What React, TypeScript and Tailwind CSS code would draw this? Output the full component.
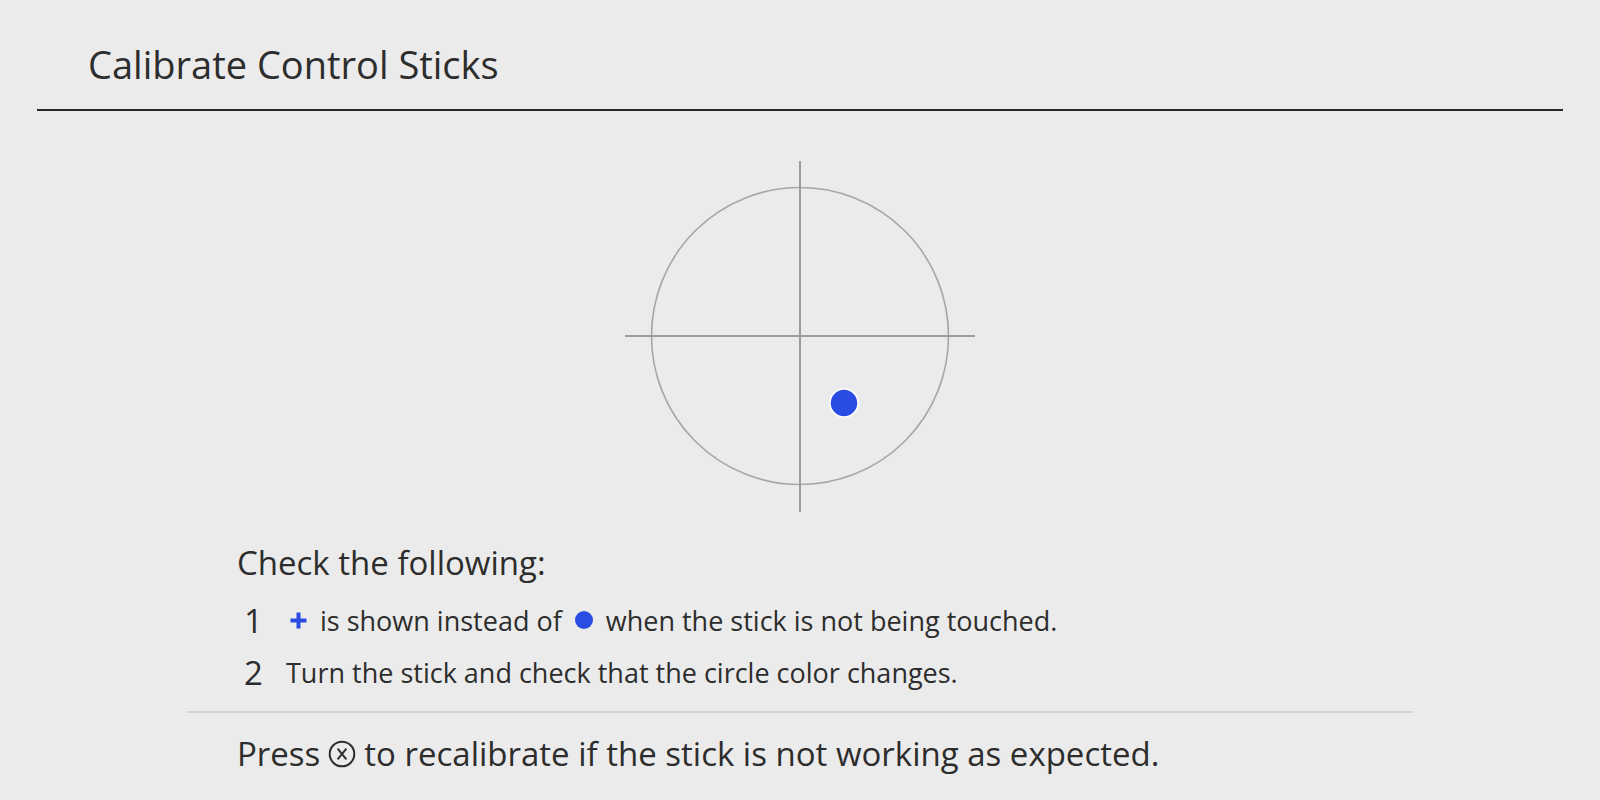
import React from 'react';

const BLUE = '#2b4ce3';

function StickDiagram() {
  return (
    <svg width="352" height="352" viewBox="0 0 352 352" className="block">
      <circle cx="176" cy="176" r="148.5" fill="none" stroke="#a6a6a6" strokeWidth="1.6" />
      <line x1="176" y1="1" x2="176" y2="352" stroke="#9c9c9c" strokeWidth="2" />
      <line x1="1" y1="176" x2="351" y2="176" stroke="#9c9c9c" strokeWidth="2" />
      <circle cx="220" cy="243" r="14" fill={BLUE} stroke="#ffffff" strokeWidth="1.5" />
    </svg>
  );
}

function PlusMark() {
  return (
    <svg width="17" height="17" viewBox="0 0 17 17" className="inline-block">
      <rect x="6.5" y="0.5" width="4" height="16" fill={BLUE} />
      <rect x="0.5" y="6.5" width="16" height="4" fill={BLUE} />
    </svg>
  );
}

function DotMark() {
  return <span className="inline-block w-[18px] h-[18px] rounded-full bg-[#2b4ce3]" />;
}

function XButton() {
  return (
    <svg width="28" height="28" viewBox="0 0 28 28" className="inline-block">
      <circle cx="14" cy="14" r="12.3" fill="none" stroke="#2d2d2d" strokeWidth="2" />
      <path d="M9.6 8.6 L18.4 19.4 M18.4 8.6 L9.6 19.4" stroke="#2d2d2d" strokeWidth="2" fill="none" />
    </svg>
  );
}

function Step({ n, children }: { n: number; children: React.ReactNode }) {
  return (
    <div className="flex items-center h-[52px]">
      <span className="w-[53px] pl-[7px] text-[33px] leading-none">{n}</span>
      <span className="flex items-center gap-[13px] text-[27px] leading-none">{children}</span>
    </div>
  );
}

export default function App() {
  return (
    <div className="w-[1600px] h-[800px] bg-[#ebebeb] text-[#2d2d2d] font-['Open_Sans',sans-serif] overflow-hidden">
      <header className="mx-[37px] pt-[40px]">
        <h1 className="pl-[51px] text-[38px] leading-[48px] h-[69px]">Calibrate Control Sticks</h1>
        <div className="h-[2px] bg-[#262626]" />
      </header>

      <div className="flex justify-center mt-[49px]">
        <StickDiagram />
      </div>

      <section className="w-[1226px] mx-auto mt-[31px]">
        <div className="pl-[50px]">
          <p className="text-[33px] leading-[40px]">Check the following:</p>
          <div className="mt-[11px]">
            <Step n={1}>
              <PlusMark />
              <span>is shown instead of</span>
              <DotMark />
              <span>when the stick is not being touched.</span>
            </Step>
            <Step n={2}>
              <span className="-ml-[4px]">Turn the stick and check that the circle color changes.</span>
            </Step>
          </div>
        </div>
        <div className="h-[2px] bg-[#d2d2d2] mt-[13px]" />
        <p className="pl-[50px] mt-[21px] text-[33px] leading-[40px] flex items-center gap-[8px]">
          <span>Press</span>
          <XButton />
          <span>to recalibrate if the stick is not working as expected.</span>
        </p>
      </section>
    </div>
  );
}
